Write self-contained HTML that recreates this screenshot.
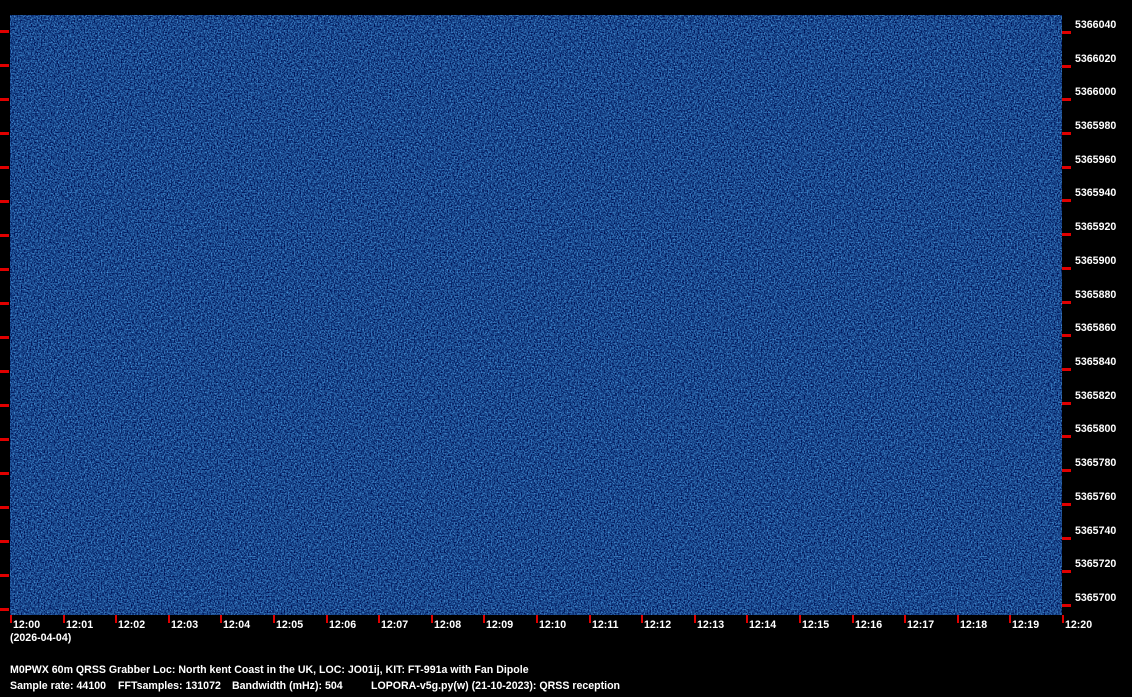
<!DOCTYPE html>
<html><head><meta charset="utf-8"><style>
html,body{margin:0;padding:0;background:#000;width:1132px;height:697px;overflow:hidden;position:relative;font-family:"Liberation Sans",sans-serif;font-weight:bold;color:#fff;font-size:10.6px}
.t{position:absolute;white-space:nowrap;line-height:12px}
.rt{position:absolute;left:1062px;width:9px;height:3px;background:#e00000}
.lt{position:absolute;left:0;width:9px;height:3px;background:#e00000}
.vt{position:absolute;top:615px;width:2px;height:8px;background:#e00000}
</style></head><body>
<svg style="position:absolute;left:10px;top:15px" width="1052" height="600">
<defs><filter id="n" x="0" y="0" width="100%" height="100%" color-interpolation-filters="sRGB">
<feTurbulence type="fractalNoise" baseFrequency="0.7" numOctaves="2" seed="3"/>
<feColorMatrix type="matrix" values="0.6 0 0 0 -0.2  1.0 0 0 0 -0.22  1.0 0 0 0 0.05  0 0 0 0 1"/>
</filter></defs>
<rect width="1052" height="600" fill="#1d4b8f"/>
<rect width="1052" height="600" filter="url(#n)"/>
</svg>
<div class="lt" style="top:30px"></div><div class="lt" style="top:64px"></div><div class="lt" style="top:98px"></div><div class="lt" style="top:132px"></div><div class="lt" style="top:166px"></div><div class="lt" style="top:200px"></div><div class="lt" style="top:234px"></div><div class="lt" style="top:268px"></div><div class="lt" style="top:302px"></div><div class="lt" style="top:336px"></div><div class="lt" style="top:370px"></div><div class="lt" style="top:404px"></div><div class="lt" style="top:438px"></div><div class="lt" style="top:472px"></div><div class="lt" style="top:506px"></div><div class="lt" style="top:540px"></div><div class="lt" style="top:574px"></div><div class="lt" style="top:608px"></div>
<div class="rt" style="top:31px"></div><div class="rt" style="top:65px"></div><div class="rt" style="top:98px"></div><div class="rt" style="top:132px"></div><div class="rt" style="top:166px"></div><div class="rt" style="top:199px"></div><div class="rt" style="top:233px"></div><div class="rt" style="top:267px"></div><div class="rt" style="top:301px"></div><div class="rt" style="top:334px"></div><div class="rt" style="top:368px"></div><div class="rt" style="top:402px"></div><div class="rt" style="top:435px"></div><div class="rt" style="top:469px"></div><div class="rt" style="top:503px"></div><div class="rt" style="top:537px"></div><div class="rt" style="top:570px"></div><div class="rt" style="top:604px"></div>
<div class="t" style="left:1075px;top:19px">5366040</div><div class="t" style="left:1075px;top:53px">5366020</div><div class="t" style="left:1075px;top:86px">5366000</div><div class="t" style="left:1075px;top:120px">5365980</div><div class="t" style="left:1075px;top:154px">5365960</div><div class="t" style="left:1075px;top:187px">5365940</div><div class="t" style="left:1075px;top:221px">5365920</div><div class="t" style="left:1075px;top:255px">5365900</div><div class="t" style="left:1075px;top:289px">5365880</div><div class="t" style="left:1075px;top:322px">5365860</div><div class="t" style="left:1075px;top:356px">5365840</div><div class="t" style="left:1075px;top:390px">5365820</div><div class="t" style="left:1075px;top:423px">5365800</div><div class="t" style="left:1075px;top:457px">5365780</div><div class="t" style="left:1075px;top:491px">5365760</div><div class="t" style="left:1075px;top:525px">5365740</div><div class="t" style="left:1075px;top:558px">5365720</div><div class="t" style="left:1075px;top:592px">5365700</div>
<div class="vt" style="left:10px"></div><div class="vt" style="left:63px"></div><div class="vt" style="left:115px"></div><div class="vt" style="left:168px"></div><div class="vt" style="left:220px"></div><div class="vt" style="left:273px"></div><div class="vt" style="left:326px"></div><div class="vt" style="left:378px"></div><div class="vt" style="left:431px"></div><div class="vt" style="left:483px"></div><div class="vt" style="left:536px"></div><div class="vt" style="left:589px"></div><div class="vt" style="left:641px"></div><div class="vt" style="left:694px"></div><div class="vt" style="left:746px"></div><div class="vt" style="left:799px"></div><div class="vt" style="left:852px"></div><div class="vt" style="left:904px"></div><div class="vt" style="left:957px"></div><div class="vt" style="left:1009px"></div><div class="vt" style="left:1062px"></div>
<div class="t" style="left:13px;top:619px">12:00</div><div class="t" style="left:66px;top:619px">12:01</div><div class="t" style="left:118px;top:619px">12:02</div><div class="t" style="left:171px;top:619px">12:03</div><div class="t" style="left:223px;top:619px">12:04</div><div class="t" style="left:276px;top:619px">12:05</div><div class="t" style="left:329px;top:619px">12:06</div><div class="t" style="left:381px;top:619px">12:07</div><div class="t" style="left:434px;top:619px">12:08</div><div class="t" style="left:486px;top:619px">12:09</div><div class="t" style="left:539px;top:619px">12:10</div><div class="t" style="left:592px;top:619px">12:11</div><div class="t" style="left:644px;top:619px">12:12</div><div class="t" style="left:697px;top:619px">12:13</div><div class="t" style="left:749px;top:619px">12:14</div><div class="t" style="left:802px;top:619px">12:15</div><div class="t" style="left:855px;top:619px">12:16</div><div class="t" style="left:907px;top:619px">12:17</div><div class="t" style="left:960px;top:619px">12:18</div><div class="t" style="left:1012px;top:619px">12:19</div><div class="t" style="left:1065px;top:619px">12:20</div>
<div class="t" style="left:10px;top:632px">(2026-04-04)</div>
<div class="t" style="left:10px;top:664px">M0PWX 60m QRSS Grabber Loc: North kent Coast in the UK, LOC: JO01ij, KIT: FT-991a with Fan Dipole</div>
<div class="t" style="left:10px;top:680px">Sample rate: 44100</div>
<div class="t" style="left:118px;top:680px">FFTsamples: 131072</div>
<div class="t" style="left:232px;top:680px">Bandwidth (mHz): 504</div>
<div class="t" style="left:371px;top:680px">LOPORA-v5g.py(w) (21-10-2023): QRSS reception</div>
</body></html>
